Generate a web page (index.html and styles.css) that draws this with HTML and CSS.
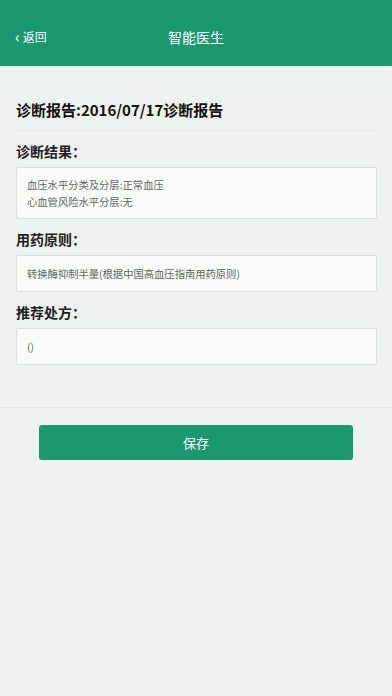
FILE: index.html
```html
<!DOCTYPE html>
<html lang="zh">
<head>
  <meta charset="UTF-8">
  <meta name="viewport" content="width=device-width, initial-scale=1.0">
  <title>智能医生</title>
  <link rel="stylesheet" href="styles.css">
</head>
<body>
    <div class="page">
        <div class="nav-bar">
            <a class="nav-back" href="#"><span class="back-arrow">‹</span>返回</a>
            <h1>智能医生</h1>
        </div>

        <div class="report">
            <h2 class="report-title">诊断报告:2016/07/17诊断报告</h2>

            <div class="section">
                <h3>诊断结果：</h3>
                <div class="field">
                    <p>血压水平分类及分层:正常血压</p>
                    <p>心血管风险水平分层:无</p>
                </div>
            </div>

            <div class="section">
                <h3>用药原则：</h3>
                <div class="field">
                    <p>转换酶抑制半量(根据中国高血压指南用药原则)</p>
                </div>
            </div>

            <div class="section">
                <h3>推荐处方：</h3>
                <div class="field">
                    <p>()</p>
                </div>
            </div>
        </div>

        <div class="actions">
            <button class="save-btn">保存</button>
        </div>
    </div>
</body>
</html>
```

FILE: styles.css
```css
body {
    margin: 0;
    font-family: "Noto Sans CJK SC", "Noto Sans", sans-serif;
    background-color: #eff3ef;
    color: #222;
}
.page {
    min-height: 696px;
}
.nav-bar {
    height: 66px;
    background-color: #1a9870;
    display: flex;
    align-items: center;
    justify-content: center;
    position: relative;
    padding-top: 8px;
    box-sizing: border-box;
}
.nav-bar h1 {
    margin: 0;
    font-size: 14px;
    line-height: 20px;
    font-weight: normal;
    color: #fff;
}
.nav-back {
    position: absolute;
    left: 15px;
    top: 28px;
    color: #fff;
    text-decoration: none;
    font-size: 12px;
    line-height: 18px;
    display: flex;
    align-items: center;
}
.back-arrow {
    font-size: 16px;
    margin-right: 3px;
    line-height: 1;
    position: relative;
    top: -1px;
}
.report {
    padding: 0 15px 42px 16px;
    border-bottom: 1px solid #e3e7e3;
}
.report-title {
    margin: 0;
    padding: 33px 0 9px;
    font-size: 15px;
    font-weight: bold;
    color: #111;
    border-bottom: 1px solid #e6eae6;
    line-height: 22px;
}
.section h3 {
    margin: 0;
    padding: 10px 0 6px;
    font-size: 14px;
    font-weight: bold;
    line-height: 20px;
    color: #222;
}
.field {
    background-color: #f8fbf8;
    border: 1px solid #dcdfdc;
    border-radius: 2px;
    padding: 8px 10px;
    min-height: 19px;
    display: flex;
    flex-direction: column;
    justify-content: center;
}
.field p {
    margin: 0;
    font-size: 10.3px;
    line-height: 17px;
    color: #666;
}
.actions {
    padding: 17px 39px;
}
.save-btn {
    display: block;
    width: 100%;
    height: 35px;
    border: none;
    border-radius: 3px;
    background-color: #1a9870;
    color: #fff;
    font-family: "Noto Sans CJK SC", sans-serif;
    font-size: 13px;
}
```
